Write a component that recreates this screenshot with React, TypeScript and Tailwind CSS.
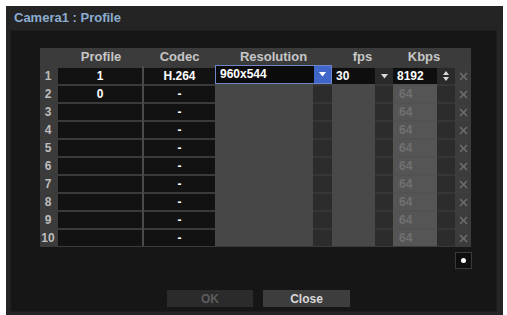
import React from "react";

function Tri({ color = "#ffffff" }: { color?: string }) {
  return (
    <svg width="7" height="5" viewBox="0 0 7 5">
      <polygon points="0,0 7,0 3.5,4.5" fill={color} />
    </svg>
  );
}

function XMark({ color }: { color: string }) {
  return (
    <svg width="9" height="9" viewBox="0 0 9 9">
      <line x1="1" y1="1" x2="8" y2="8" stroke={color} strokeWidth="1.6" />
      <line x1="8" y1="1" x2="1" y2="8" stroke={color} strokeWidth="1.6" />
    </svg>
  );
}

function Row({ n }: { n: number }) {
  const first = n === 1;
  return (
    <div className="flex h-[18px] text-[12px] font-bold leading-[16px]">
      <div className="w-[18px] pt-[2px] pr-[2px] text-center text-[#bdbdbd]">{n}</div>
      <div className="w-[84px] border-t-2 border-[#3a3a3a] bg-[#121212] text-center text-white">
        {n === 1 ? "1" : n === 2 ? "0" : ""}
      </div>
      <div className="w-[2px] bg-[#4a4a4a]" />
      <div className="w-[71px] border-t-2 border-[#3a3a3a] bg-[#121212] text-center text-white">
        {first ? "H.264" : "-"}
      </div>
      {first ? (
        <>
          <div className="w-[117px] h-[19px] -mt-[1px] flex border border-[#6f86c8] bg-[#0b0b0b]">
            <div className="flex-1 pl-[4px] text-white leading-[17px]">960x544</div>
            <div className="w-[17px] bg-[#3f66c8] flex items-center justify-center">
              <Tri />
            </div>
          </div>
          <div className="w-[43px] border-t-2 border-[#3a3a3a] bg-[#0e0e0e] pl-[4px] text-white">30</div>
          <div className="w-[18px] border-t-2 border-[#3a3a3a] bg-[#2a2a2a] flex items-center justify-center">
            <Tri color="#d8d8d8" />
          </div>
          <div className="w-[44px] border-t-2 border-[#3a3a3a] bg-[#0e0e0e] pl-[4px] text-white">8192</div>
          <div className="w-[18px] border-t-2 border-[#3a3a3a] bg-[#2a2a2a] flex flex-col items-center justify-center gap-[2px]">
            <svg width="6" height="4" viewBox="0 0 6 4">
              <polygon points="0,4 6,4 3,0" fill="#d8d8d8" />
            </svg>
            <svg width="6" height="4" viewBox="0 0 6 4">
              <polygon points="0,0 6,0 3,4" fill="#d8d8d8" />
            </svg>
          </div>
        </>
      ) : (
        <>
          <div className="w-[98px] bg-[#474747]" />
          <div className="w-[19px] border-t-2 border-[#363636] bg-[#2c2c2c]" />
          <div className="w-[43px] bg-[#494949]" />
          <div className="w-[18px] border-t-2 border-[#363636] bg-[#2c2c2c]" />
          <div className="w-[44px] border-t-2 border-[#525252] bg-[#555555] pl-[6px] text-[#707070]">64</div>
          <div className="w-[18px] border-t-2 border-[#363636] bg-[#2c2c2c]" />
        </>
      )}
      <div className="w-[16px] border-t-2 border-[#3c3c3c] bg-[#3c3c3c] flex items-center justify-center">
        <XMark color="#6c6c6c" />
      </div>
    </div>
  );
}

export default function App() {
  const rows = [1, 2, 3, 4, 5, 6, 7, 8, 9, 10];
  return (
    <div className="w-[507px] h-[315px] bg-white pt-[6px] pl-[6px] pr-[4px] overflow-hidden font-['Liberation_Sans',Arial,sans-serif]">
      <div className="h-[309px] bg-[#242424] flex flex-col">
        <div className="h-[24px] flex items-center pl-[8px] text-[13px] font-bold text-[#8cadd0]">
          Camera1 : Profile
        </div>
        <div className="flex-1 ml-[4px] mr-[6px] mb-[3px] bg-[#161616] border border-[#1d1d1d] flex flex-col">
          <div className="ml-[29px] mt-[17px] w-[431px] bg-[#3b3b3b] pb-[1px]">
            <div className="flex h-[18px] text-[13px] font-bold text-[#c6c6c6] leading-[18px]">
              <div className="w-[18px]" />
              <div className="w-[86px] text-center">Profile</div>
              <div className="w-[71px] text-center">Codec</div>
              <div className="w-[117px] text-center">Resolution</div>
              <div className="w-[61px] text-center">fps</div>
              <div className="w-[62px] text-center">Kbps</div>
              <div className="w-[16px]" />
            </div>
            {rows.map((n) => (
              <Row key={n} n={n} />
            ))}
          </div>
          <div className="ml-[444px] mt-[5px] w-[17px] h-[17px] border border-[#3a3a3a] bg-[#0e0e0e] flex items-center justify-center">
            <div className="w-[5px] h-[5px] rounded-full bg-white" />
          </div>
          <div className="ml-[156px] mt-[21px] flex gap-[10px] text-[12px] font-bold">
            <div className="w-[86px] h-[17px] bg-[#2b2b2b] text-[#5c5c5c] flex items-center justify-center">OK</div>
            <div className="w-[87px] h-[17px] bg-[#3d3d3d] text-[#d8d8d8] flex items-center justify-center">Close</div>
          </div>
        </div>
      </div>
    </div>
  );
}
